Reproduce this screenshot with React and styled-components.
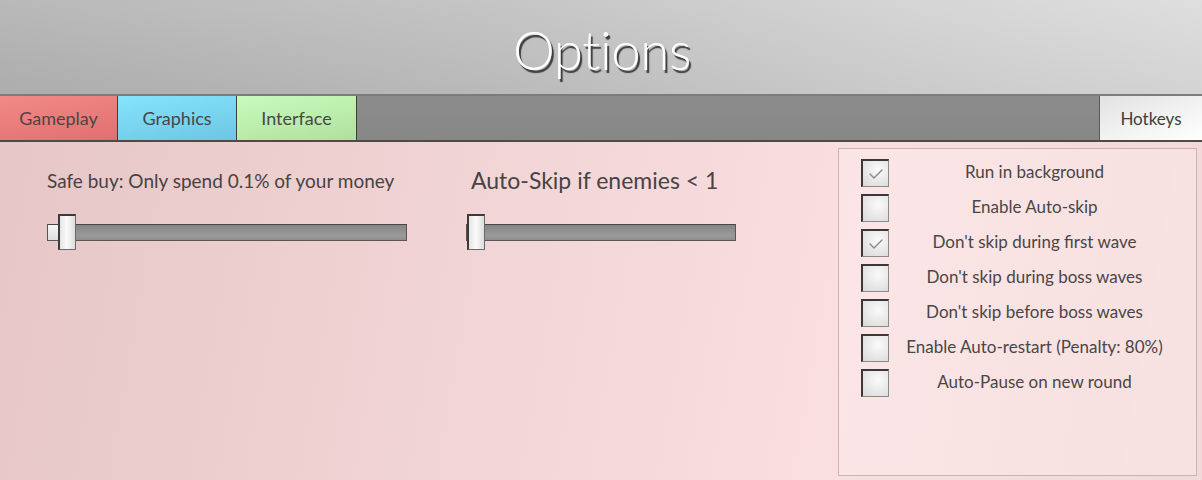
import React from 'react';
import styled, { createGlobalStyle } from 'styled-components';

const GlobalStyle = createGlobalStyle`
  html, body {
    margin: 0;
    padding: 0;
    width: 1202px;
    height: 480px;
    overflow: hidden;
    font-family: Lato, 'Noto Sans', sans-serif;
  }
`;

const tabs = [
  { label: 'Gameplay', from: '#e07070', to: '#f28a86' },
  { label: 'Graphics', from: '#6cc6e4', to: '#86e4fc' },
  { label: 'Interface', from: '#b0e0a0', to: '#c8fcbc' },
];

const options = [
  { label: 'Run in background', checked: true },
  { label: 'Enable Auto-skip', checked: false },
  { label: "Don't skip during first wave", checked: true },
  { label: "Don't skip during boss waves", checked: false },
  { label: "Don't skip before boss waves", checked: false },
  { label: 'Enable Auto-restart (Penalty: 80%)', checked: false },
  { label: 'Auto-Pause on new round', checked: false },
];

export default function App() {
  return (
    <Screen>
      <GlobalStyle />
      <Header>
        <Title>Options</Title>
      </Header>
      <TabBar>
        {tabs.map((t) => (
          <Tab key={t.label} $from={t.from} $to={t.to}>
            {t.label}
          </Tab>
        ))}
        <TabFill />
        <HotkeysTab>Hotkeys</HotkeysTab>
      </TabBar>
      <Content>
        <Sliders>
          <SliderGroup>
            <SliderLabel>Safe buy: Only spend 0.1% of your money</SliderLabel>
            <Slider width={360} value={10} />
          </SliderGroup>
          <SliderGroup>
            <SliderLabel $big>Auto-Skip if enemies &lt; 1</SliderLabel>
            <Slider width={270} value={0} />
          </SliderGroup>
        </Sliders>
        <Panel>
          {options.map((o) => (
            <OptionRow key={o.label}>
              <CheckBox>
                {o.checked && (
                  <svg width="16" height="12" viewBox="0 0 16 12">
                    <polyline
                      points="2,6 6,10 14,2"
                      fill="none"
                      stroke="#8a8a8a"
                      strokeWidth="1.4"
                      strokeLinecap="round"
                      strokeLinejoin="round"
                    />
                  </svg>
                )}
              </CheckBox>
              <OptionLabel>{o.label}</OptionLabel>
            </OptionRow>
          ))}
        </Panel>
      </Content>
    </Screen>
  );
}

function Slider({ width, value }) {
  return (
    <Track style={{ width }}>
      <TrackFill style={{ width: value }} />
      <Thumb style={{ left: value }} />
    </Track>
  );
}

const Screen = styled.div`
  width: 1202px;
  height: 480px;
  display: flex;
  flex-direction: column;
  background: linear-gradient(100deg, #e6c6c7 0%, #f3d6d7 45%, #fadfe0 70%, #f2d8d8 100%);
`;

const Header = styled.header`
  height: 94px;
  display: flex;
  align-items: center;
  justify-content: center;
  background:
    linear-gradient(to bottom, rgba(255, 255, 255, 0.08), rgba(0, 0, 0, 0.04)),
    linear-gradient(100deg, #b3b3b3 0%, #c0c0c0 40%, #d2d2d2 75%, #dcdcdc 100%);
`;

const Title = styled.h1`
  margin: 4px 0 0 2px;
  font-family: Lato, 'Noto Sans', sans-serif;
  font-weight: 300;
  font-size: 53px;
  letter-spacing: -0.5px;
  color: #ffffff;
  text-shadow: 2px 3px 1px rgba(45, 45, 45, 0.9);
`;

const TabBar = styled.nav`
  height: 44px;
  display: flex;
  border-top: 2px solid #7c7c7c;
  border-bottom: 2px solid #4f4a4a;
`;

const Tab = styled.div`
  width: 117px;
  display: flex;
  align-items: center;
  justify-content: center;
  border-right: 1px solid #3e3e3e;
  font-size: 18px;
  color: #4a4646;
  background: linear-gradient(170deg, ${(p) => p.$to} 0%, ${(p) => p.$from} 100%);
  &:nth-child(2) {
    width: 118px;
  }
  &:nth-child(3) {
    width: 119px;
  }
`;

const TabFill = styled.div`
  flex: 1;
  background: linear-gradient(to bottom, #8c8c8c, #878787);
`;

const HotkeysTab = styled.div`
  width: 102px;
  display: flex;
  align-items: center;
  justify-content: center;
  border-left: 1px solid #5a5a5a;
  font-size: 17px;
  color: #3e3e3e;
  background: linear-gradient(160deg, #e2e2e2 0%, #f4f4f4 60%, #ffffff 100%);
`;

const Content = styled.main`
  flex: 1;
  display: flex;
  padding: 6px 5px 4px 47px;
  min-height: 0;
`;

const Sliders = styled.section`
  flex: 1;
  display: flex;
  gap: 59px;
  padding-top: 19px;
`;

const SliderGroup = styled.div`
  display: flex;
  flex-direction: column;
  gap: 21px;
`;

const SliderLabel = styled.div`
  height: 26px;
  display: flex;
  align-items: center;
  font-size: ${(p) => (p.$big ? '23px' : '19px')};
  color: #474343;
  white-space: nowrap;
  padding-left: ${(p) => (p.$big ? '5px' : '0')};
`;

const Track = styled.div`
  position: relative;
  height: 17px;
  margin-top: 10px;
  box-sizing: border-box;
  border: 1px solid #5a5656;
  border-top-color: #4a4646;
  background: linear-gradient(to bottom, #858585, #9a9a9a 70%, #8e8e8e);
`;

const TrackFill = styled.div`
  height: 100%;
  background: linear-gradient(to bottom, #f6f6f6, #dedede);
`;

const Thumb = styled.div`
  position: absolute;
  top: -11px;
  width: 18px;
  height: 36px;
  box-sizing: border-box;
  border: 1px solid #6a6a6a;
  border-top: 2px solid #3e3a3a;
  border-left: 2px solid #3e3a3a;
  background: linear-gradient(to right, #e4e4e4, #fbfbfb 45%, #dcdcdc);
`;

const Panel = styled.aside`
  width: 359px;
  box-sizing: border-box;
  display: flex;
  flex-direction: column;
  gap: 7px;
  padding: 10px 22px 0 22px;
  border: 1px solid #c9b3b3;
  background: linear-gradient(100deg, rgba(255, 255, 255, 0.18), rgba(255, 240, 240, 0.35));
`;

const OptionRow = styled.div`
  height: 28px;
  display: flex;
  align-items: center;
`;

const CheckBox = styled.div`
  width: 28px;
  height: 28px;
  box-sizing: border-box;
  margin-right: 6px;
  display: flex;
  align-items: center;
  justify-content: center;
  border: 1px solid #8a8a8a;
  border-top: 2px solid #3c3838;
  border-left: 2px solid #3c3838;
  background: radial-gradient(circle at 60% 35%, #fafafa 0%, #e6e6e6 60%, #d8d8d8 100%);
`;

const OptionLabel = styled.span`
  flex: 1;
  margin-top: -3px;
  text-align: center;
  font-size: 17px;
  color: #4a4646;
  white-space: nowrap;
`;
